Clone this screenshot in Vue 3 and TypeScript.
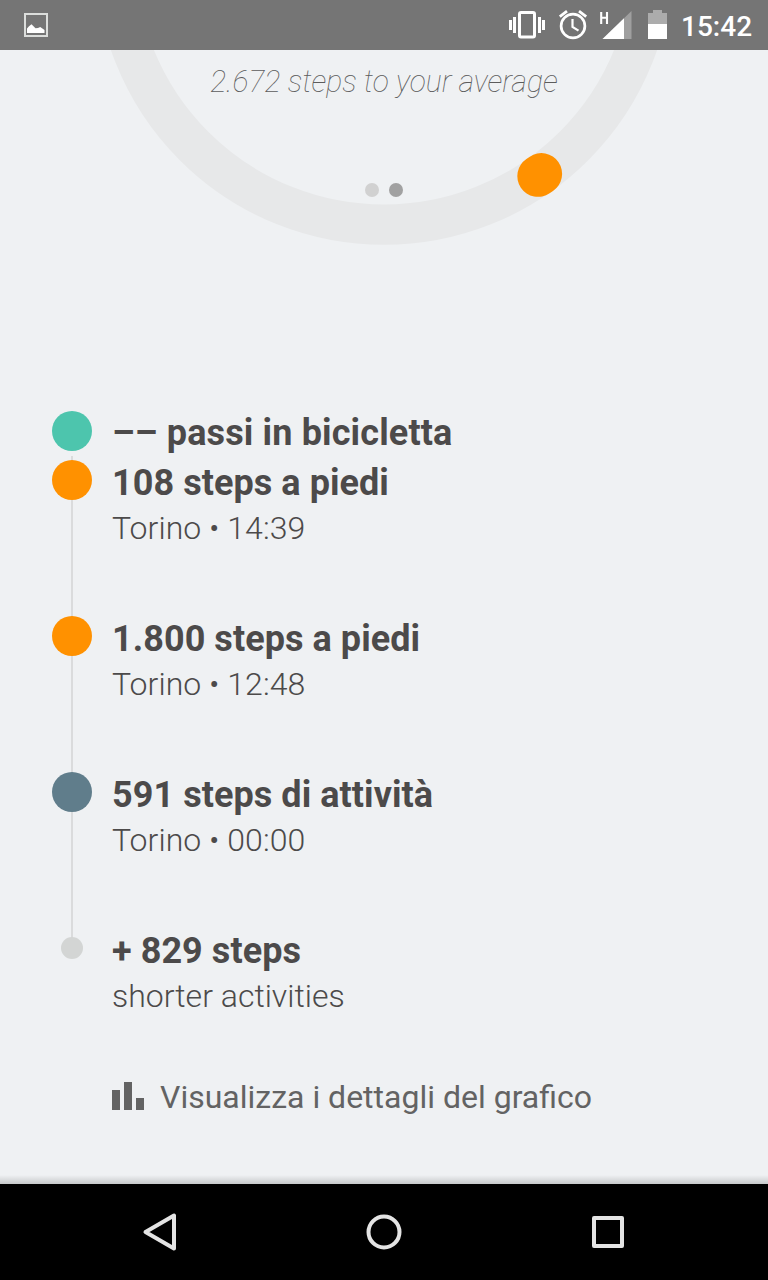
<script setup lang="ts">
interface Activity {
  title: string
  detail: string
  tone: 'teal' | 'orange' | 'slate' | 'muted'
}

const activities: Activity[] = [
  { title: '–– passi in bicicletta', detail: '', tone: 'teal' },
  { title: '108 steps a piedi', detail: 'Torino • 14:39', tone: 'orange' },
  { title: '1.800 steps a piedi', detail: 'Torino • 12:48', tone: 'orange' },
  { title: '591 steps di attività', detail: 'Torino • 00:00', tone: 'slate' },
  { title: '+ 829 steps', detail: 'shorter activities', tone: 'muted' },
]
</script>

<template>
  <div class="screen">
    <header class="status">
      <svg class="picture" width="24" height="24" viewBox="0 0 24 24">
        <rect x="1" y="1" width="22" height="22" fill="none" stroke="#dcdedc" stroke-width="2" />
        <path d="M3 20V15.500L5 13.200L7.500 11.300L9.500 13.200L11.500 15.200L14 15L16.200 14L20.500 17V20Z" fill="#fff" />
      </svg>
      <svg class="signals" width="160" height="50" viewBox="508 0 160 50">
        <g fill="#fff">
          <rect x="509" y="20" width="3" height="10" />
          <rect x="513" y="17" width="3" height="16" />
          <rect x="538" y="17" width="3" height="16" />
          <rect x="542" y="20" width="3" height="10" />
        </g>
        <rect x="519.500" y="12.500" width="15" height="24.500" rx="1.500" fill="none" stroke="#fff" stroke-width="3" />
        <g fill="none" stroke="#fff">
          <circle cx="573" cy="26" r="11.900" stroke-width="2.700" />
          <path d="M559.800 16.700L567 11.200M586.200 16.700L579 11.200" stroke-width="2.800" />
          <path d="M572.500 19V26.800L578.500 30.700" stroke-width="2.200" />
        </g>
        <path d="M631.500 11V39H602.500Z" fill="#9f9f9f" />
        <path d="M624 18.200V39H602.500Z" fill="#fff" />
        <path d="M601.200 12V24M607 12V24M601 17.800H607" fill="none" stroke="#fff" stroke-width="2.100" />
        <path d="M648 24V13H653V10H662V13H667V24Z" fill="#acacac" />
        <rect x="648" y="24" width="19" height="15" fill="#fff" />
      </svg>
      <span class="clock">15:42</span>
    </header>

    <main class="content">
      <section class="summary">
        <svg class="ring" width="768" height="210" viewBox="0 50 768 210">
          <circle cx="384" cy="-44" r="268.700" fill="none" stroke="#e7e8e9" stroke-width="40.300" />
          <path d="M538 176.100L541.400 173.800" stroke="#ff9100" stroke-width="41.400" stroke-linecap="round" />
        </svg>
        <p class="average">2.672 steps to your average</p>
        <div class="pager">
          <span class="page"></span>
          <span class="page current"></span>
        </div>
      </section>

      <ol class="timeline">
        <li v-for="item in activities" :key="item.title" class="entry" :class="item.tone">
          <div class="rail">
            <span class="dot"></span>
          </div>
          <div class="text">
            <h2>{{ item.title }}</h2>
            <p v-if="item.detail">{{ item.detail }}</p>
          </div>
        </li>
      </ol>

      <div class="details">
        <svg width="32" height="28" viewBox="0 0 32 28" fill="#636363">
          <path d="M0 8H8V28H0ZM12 0H20V28H12ZM24 16H32V28H24Z" />
        </svg>
        <span>Visualizza i dettagli del grafico</span>
      </div>
      <div class="shade"></div>
    </main>

    <nav class="navigation">
      <svg width="768" height="96" viewBox="0 0 768 96" fill="none" stroke="#e4e4e4" stroke-width="4" stroke-linejoin="round">
        <path d="M174 31.500V64.500L145.500 48Z" />
        <circle cx="384" cy="48" r="15.500" />
        <rect x="594" y="34" width="28" height="28" />
      </svg>
    </nav>
  </div>
</template>

<style>
body {
  margin: 0;
}
</style>

<style scoped>
.screen {
  display: flex;
  flex-direction: column;
  width: 768px;
  height: 1280px;
  overflow: hidden;
  background: #eff1f3;
  font-family: Roboto, sans-serif;
}

.status {
  display: flex;
  align-items: center;
  flex: none;
  height: 50px;
  box-sizing: border-box;
  padding: 0 17px 0 24px;
  background: #757575;
  color: #fff;
}

.signals {
  margin-left: auto;
}

.clock {
  width: 70px;
  margin: 3px 0 0 13px;
  font-size: 28px;
  line-height: 34px;
  font-weight: 500;
  white-space: nowrap;
}

.content {
  position: relative;
  flex: 1;
  min-height: 0;
}

.summary {
  position: relative;
  height: 360px;
}

.ring {
  display: block;
}

.average {
  position: absolute;
  top: 12px;
  left: 0;
  width: 100%;
  margin: 0;
  text-align: center;
  font-size: 32px;
  line-height: 38px;
  font-style: italic;
  font-weight: 100;
  transform: scaleX(0.941);
  color: #5c5c5c;
}

.pager {
  position: absolute;
  top: 133px;
  left: 365px;
  display: flex;
  gap: 10px;
}

.page {
  width: 14px;
  height: 14px;
  border-radius: 50%;
  background: #d1d1d1;
}

.page.current {
  background: #a1a1a1;
}

.timeline {
  margin: 0;
  padding: 0;
  list-style: none;
}

.entry {
  display: flex;
  height: 156px;
}

.entry.teal {
  height: 50px;
}

.entry.muted {
  height: 116px;
}

.rail {
  position: relative;
  display: flex;
  justify-content: center;
  flex: none;
  width: 40px;
  margin: 0 20px 0 52px;
}

.orange .rail::before,
.slate .rail::before {
  content: '';
  position: absolute;
  top: -4px;
  left: 19px;
  width: 2px;
  height: 156px;
  background: #dadbdc;
}

.slate .rail::before {
  height: 172px;
}

.dot {
  position: relative;
  width: 40px;
  height: 40px;
  border-radius: 50%;
}

.teal .dot {
  margin-top: 1px;
  background: #4dc5ad;
}

.orange .dot {
  background: #ff9100;
}

.slate .dot {
  background: #607d8b;
}

.muted .dot {
  width: 22px;
  height: 22px;
  margin-top: 9px;
  background: #d3d5d4;
}

.text h2 {
  margin: 2px 0 4px;
  font-size: 36px;
  line-height: 43px;
  font-weight: 700;
  letter-spacing: 0.06px;
  color: #4c4a4a;
  white-space: nowrap;
}

.teal h2 {
  letter-spacing: 0.14px;
}

.text p {
  margin: 0;
  font-size: 32px;
  line-height: 38px;
  font-weight: 300;
  color: #4c4a4a;
  white-space: nowrap;
}

.orange p,
.slate p {
  letter-spacing: 0.04px;
}

.details {
  display: flex;
  align-items: center;
  gap: 16px;
  height: 40px;
  padding: 32px 0 0 112px;
  font-size: 32px;
  color: #636363;
  white-space: nowrap;
}

.details span {
  padding-top: 2px;
}

.shade {
  position: absolute;
  right: 0;
  bottom: 0;
  left: 0;
  height: 9px;
  background: linear-gradient(rgba(0, 0, 0, 0), rgba(0, 0, 0, 0.17));
}

.navigation {
  flex: none;
  height: 96px;
  background: #000;
}

.navigation svg {
  display: block;
}
</style>
